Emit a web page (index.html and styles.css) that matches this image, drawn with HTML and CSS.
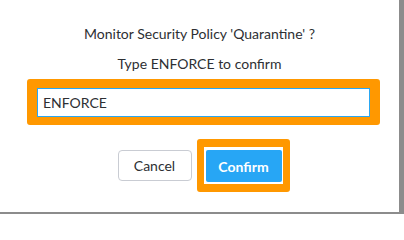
FILE: index.html
```html
<!DOCTYPE html>
<html lang="en">
<head>
<meta charset="utf-8">
<title>Confirm enforce</title>
<link rel="stylesheet" href="styles.css">
</head>
<body>
<div class="frame">
  <div class="dialog">
    <p class="title">Monitor Security Policy 'Quarantine' ?</p>
    <p class="hint">Type ENFORCE to confirm</p>
    <div class="field">
      <input class="input" type="text" value="ENFORCE" autofocus>
    </div>
    <div class="actions">
      <button class="btn btn-cancel" type="button">Cancel</button>
      <button class="btn btn-confirm" type="button">Confirm</button>
    </div>
  </div>
</div>
</body>
</html>
```
FILE: styles.css
```css
html, body {
  margin: 0;
  padding: 0;
}
html {
  background: #ffffff;
}
body {
  width: 404px;
  height: 214px;
  background: #8c8c8c;
  font-family: Lato, "Open Sans", sans-serif;
  color: #2d2f33;
  overflow: hidden;
}
.frame {
  width: 404px;
  height: 214px;
  display: flex;
  align-items: flex-start;
}
.dialog {
  width: 399px;
  height: 212px;
  background: #ffffff;
  box-sizing: border-box;
  padding-top: 24px;
  display: flex;
  flex-direction: column;
  align-items: center;
}
.title, .hint {
  margin: 0;
  font-size: 14px;
  line-height: 20px;
  text-align: center;
}
.hint {
  margin-top: 10px;
}
.field {
  position: relative;
  margin-top: 14px;
  width: 333px;
  align-self: flex-start;
  margin-left: 37px;
}
.field::after {
  content: "";
  position: absolute;
  left: -10px;
  right: -10px;
  top: -9px;
  bottom: -8px;
  border: 9px solid #ff9800;
  border-bottom-width: 8px;
  border-right-width: 10px;
  border-left-width: 10px;
  border-radius: 3px;
  pointer-events: none;
}
.input {
  display: block;
  box-sizing: border-box;
  width: 333px;
  height: 29px;
  margin: 0;
  padding: 0 0 0 5px;
  border: 1px solid #2aa7f2;
  border-radius: 0;
  font-family: Lato, "Open Sans", sans-serif;
  font-size: 14px;
  color: #2d2f33;
  background: #fff;
  outline: none;
  caret-color: #2d2f33;
}
.actions {
  margin-top: 33px;
  display: flex;
  gap: 14px;
  align-items: flex-start;
}
.btn {
  box-sizing: border-box;
  font-family: Lato, "Open Sans", sans-serif;
  font-size: 14px;
  height: 31px;
  border-radius: 4px;
  padding: 0;
  cursor: pointer;
}
.btn-cancel {
  width: 74px;
  background: #ffffff;
  color: #2d2f33;
  border: 1px solid #c9ccd3;
}
.btn-confirm {
  position: relative;
  width: 76px;
  height: 32px;
  background: #27a6f5;
  color: #ffffff;
  font-weight: 700;
  border: none;
  border-radius: 2px;
  outline: none;
}
.btn-confirm::after {
  content: "";
  position: absolute;
  left: -9px;
  right: -8px;
  top: -11px;
  bottom: -10px;
  border: 8px solid #ff9800;
  border-left-width: 7px;
  border-right-width: 7px;
  border-radius: 3px;
  pointer-events: none;
}
```
